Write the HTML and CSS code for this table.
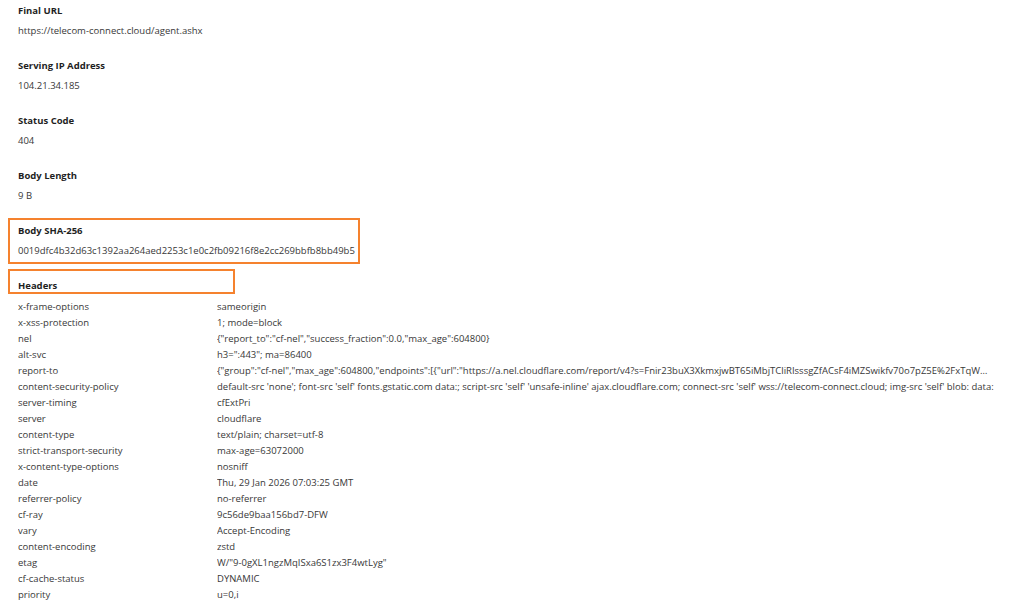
FILE: index.html
```html
<!DOCTYPE html>
<html lang="en">
<head>
    <meta charset="UTF-8">
    <meta name="viewport" content="width=device-width, initial-scale=1.0">
    <title>Response Details</title>
    <link rel="stylesheet" href="styles.css">
</head>
<body>
    <div class="details">
        <div class="field">
            <div class="field-label">Final URL</div>
            <div class="field-value">https://telecom-connect.cloud/agent.ashx</div>
        </div>
        <div class="field">
            <div class="field-label">Serving IP Address</div>
            <div class="field-value">104.21.34.185</div>
        </div>
        <div class="field">
            <div class="field-label">Status Code</div>
            <div class="field-value">404</div>
        </div>
        <div class="field">
            <div class="field-label">Body Length</div>
            <div class="field-value">9 B</div>
        </div>
        <div class="field">
            <div class="field-label">Body SHA-256</div>
            <div class="field-value">0019dfc4b32d63c1392aa264aed2253c1e0c2fb09216f8e2cc269bbfb8bb49b5</div>
        </div>

        <!-- Response headers -->
        <div class="headers">
            <div class="field-label">Headers</div>
            <table class="header-table">
                <tr><td>x-frame-options</td><td>sameorigin</td></tr>
                <tr><td>x-xss-protection</td><td>1; mode=block</td></tr>
                <tr><td>nel</td><td>{"report_to":"cf-nel","success_fraction":0.0,"max_age":604800}</td></tr>
                <tr><td>alt-svc</td><td>h3=":443"; ma=86400</td></tr>
                <tr><td>report-to</td><td>{"group":"cf-nel","max_age":604800,"endpoints":[{"url":"https://a.nel.cloudflare.com/report/v4?s=Fnir23buX3XkmxjwBT65iMbjTCliRIsssgZfACsF4iMZSwikfv70o7pZ5E%2FxTqW%2BkL"}]}</td></tr>
                <tr><td>content-security-policy</td><td>default-src 'none'; font-src 'self' fonts.gstatic.com data:; script-src 'self' 'unsafe-inline' ajax.cloudflare.com; connect-src 'self' wss://telecom-connect.cloud; img-src 'self' blob: data:</td></tr>
                <tr><td>server-timing</td><td>cfExtPri</td></tr>
                <tr><td>server</td><td>cloudflare</td></tr>
                <tr><td>content-type</td><td>text/plain; charset=utf-8</td></tr>
                <tr><td>strict-transport-security</td><td>max-age=63072000</td></tr>
                <tr><td>x-content-type-options</td><td>nosniff</td></tr>
                <tr><td>date</td><td>Thu, 29 Jan 2026 07:03:25 GMT</td></tr>
                <tr><td>referrer-policy</td><td>no-referrer</td></tr>
                <tr><td>cf-ray</td><td>9c56de9baa156bd7-DFW</td></tr>
                <tr><td>vary</td><td>Accept-Encoding</td></tr>
                <tr><td>content-encoding</td><td>zstd</td></tr>
                <tr><td>etag</td><td>W/"9-0gXL1ngzMqISxa6S1zx3F4wtLyg"</td></tr>
                <tr><td>cf-cache-status</td><td>DYNAMIC</td></tr>
                <tr><td>priority</td><td>u=0,i</td></tr>
            </table>
        </div>
    </div>

    <!-- Highlight boxes -->
    <div class="highlight highlight-hash"></div>
    <div class="highlight highlight-headers"></div>
</body>
</html>
```

FILE: styles.css
```css
body {
    font-family: "Open Sans", "Noto Sans", sans-serif;
    font-size: 9.5px;
    color: #383838;
    background-color: white;
    margin: 0;
    padding-top: 1px;
}

.details {
    padding-left: 18px;
}

.field {
    margin-bottom: 15px;
}

.field-label {
    font-weight: bold;
    color: #1f1f1f;
    line-height: 20px;
}

.field-value {
    line-height: 20px;
}

.headers .field-label {
    margin-bottom: 3px;
}

.header-table {
    border-collapse: collapse;
    table-layout: fixed;
    width: 977px;
}

.header-table td {
    padding: 0;
    line-height: 16px;
    white-space: nowrap;
    overflow: hidden;
    text-overflow: ellipsis;
}

.header-table td:first-child {
    width: 199px;
}

.highlight {
    position: absolute;
    border: 2px solid #f5822e;
}

.highlight-hash {
    left: 8px;
    top: 218px;
    width: 348px;
    height: 42px;
}

.highlight-headers {
    left: 8px;
    top: 269px;
    width: 223px;
    height: 21px;
}
```
